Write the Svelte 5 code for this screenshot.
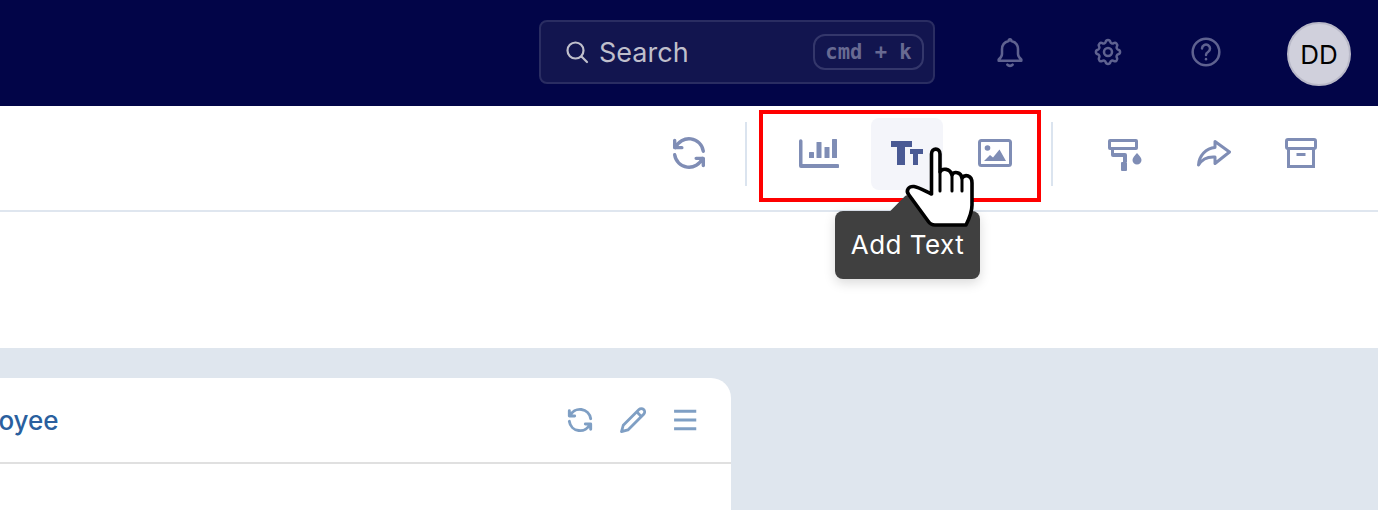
<script>
	// x, width, height of the little chart bars
	const bars = [
		[10, 5, 6],
		[17.5, 5, 16],
		[25.5, 5, 11],
		[33, 5, 19],
	];
</script>

<main class="page">
	<header class="topbar">
		<div class="search">
			<svg class="search-icon" viewBox="0 0 24 24" fill="none" stroke="currentColor" stroke-width="2.2" stroke-linecap="round">
				<circle cx="10.5" cy="10.5" r="8" />
				<path d="M16.5 16.5 22 22" />
			</svg>
			<span class="search-label">Search</span>
			<kbd>cmd + k</kbd>
		</div>
		<div class="top-icons">
			<svg viewBox="0 0 24 24" fill="none" stroke="currentColor" stroke-width="1.9" stroke-linecap="round" stroke-linejoin="round">
				<path d="M12 2.5a1 1 0 0 1 1 1.2c3 .7 5 3.2 5 6.3v3.500c0 1.500 .8 2.800 2.500 4.200v.8H3.500v-.8C5.200 16.300 6 15 6 13.500V10c0-3.100 2-5.600 5-6.300a1 1 0 0 1 1-1.200z" />
				<path d="M10 21.500c.5 .6 1.200 .9 2 .9s1.500-.3 2-.9" />
			</svg>
			<svg viewBox="0 0 24 24" fill="none" stroke="currentColor" stroke-width="1.9" stroke-linecap="round" stroke-linejoin="round">
				<path d="M10.300 4.300c.4-1.800 3-1.800 3.400 0a1.700 1.700 0 0 0 2.600 1.100c1.500-.9 3.300 .8 2.400 2.400a1.700 1.700 0 0 0 1 2.500c1.800 .4 1.800 3 0 3.400a1.700 1.700 0 0 0-1 2.600c.9 1.500-.9 3.300-2.400 2.400a1.700 1.700 0 0 0-2.600 1c-.4 1.800-3 1.800-3.400 0a1.700 1.700 0 0 0-2.600-1c-1.500 .9-3.300-.9-2.400-2.400a1.700 1.700 0 0 0-1-2.600c-1.800-.4-1.800-3 0-3.400a1.700 1.700 0 0 0 1-2.500c-.9-1.600 .9-3.300 2.400-2.400a1.700 1.700 0 0 0 2.600-1.100z" />
				<circle cx="12" cy="12" r="3" />
			</svg>
			<svg viewBox="0 0 24 24" fill="none" stroke="currentColor" stroke-width="1.9" stroke-linecap="round" stroke-linejoin="round">
				<circle cx="12" cy="12" r="10" />
				<path d="M9 9.300a3 3 0 1 1 4.500 2.700c-1 .6-1.500 1.200-1.500 2.200" />
				<path d="M12 17.300v.1" />
			</svg>
		</div>
		<div class="avatar">DD</div>
	</header>

	<section class="toolbar">
		<button class="tool">
			<svg viewBox="2.5 2.5 19 19" fill="none" stroke="currentColor" stroke-width="1.9" stroke-linecap="round" stroke-linejoin="round">
				<path d="M20 11a8.100 8.100 0 0 0-15.500-2m-.5-4v4h4" />
				<path d="M4 13a8.100 8.100 0 0 0 15.500 2m.5 4v-4h-4" />
			</svg>
		</button>
		<span class="divider"></span>
		<div class="tool-group">
			<button class="tool">
				<svg class="chart" viewBox="0 0 40 32" fill="currentColor">
					<path d="M0 5a1.500 1.500 0 0 1 3.500 0v23H38.500a2 2 0 0 1 0 4H2a2 2 0 0 1-2-2z" />
					{#each bars as [x, w, h]}
						<rect {x} y={22 - h} width={w} height={h} rx="0.5" />
					{/each}
				</svg>
			</button>
			<button class="tool active">
				<svg class="tt" viewBox="0 0 32 24" fill="currentColor">
					<path d="M0 0h21v6h-7v18H6V6H0z" />
					<path d="M19 8h13v5h-5v11h-5V13h-3z" />
				</svg>
			</button>
			<button class="tool">
				<svg class="picture" viewBox="0 0 34 28">
					<rect x="1.500" y="1.500" width="31" height="25" rx="2" fill="none" stroke="currentColor" stroke-width="3" />
					<circle cx="9.500" cy="9" r="2.800" fill="currentColor" />
					<path d="M6 22l6-6 3 2.500 6.500-8L28 22z" fill="currentColor" />
				</svg>
			</button>
		</div>
		<span class="divider"></span>
		<button class="tool">
			<svg class="roller" viewBox="0 0 36 36" fill="currentColor">
				<path fill-rule="evenodd" d="M3 4h26a2 2 0 0 1 2 2v7a2 2 0 0 1-2 2H3a2 2 0 0 1-2-2V6a2 2 0 0 1 2-2zm1 3v5h24V7z" />
				<path d="M4 15h3v3h11a2 2 0 0 1 2 2v7h-4v-5H6a2 2 0 0 1-2-2z" />
				<rect x="14" y="27" width="6" height="9" rx="1" />
				<path d="M30 18c2 2.500 4.500 4.500 4.500 7a4.500 4.500 0 0 1-9 0c0-2.500 2.500-4.500 4.500-7z" />
			</svg>
		</button>
		<button class="tool">
			<svg class="share" viewBox="-1 0 36 30" fill="none" stroke="currentColor" stroke-width="3" stroke-linejoin="round">
				<path d="M19 3.500 33.500 14 19 25.500V19C12 18.500 6 21 2.500 27 3 18 10 10 19 9.500z" />
			</svg>
		</button>
		<button class="tool">
			<svg class="tall" viewBox="0 0 32 30" fill="none" stroke="currentColor" stroke-width="3">
				<rect x="1.500" y="1.500" width="29" height="9" rx="1.500" />
				<path d="M3.500 10.500V28.500h25V10.500" />
				<path d="M11.500 16.500h9" />
			</svg>
		</button>

		<!-- annotation laid over the toolbar -->
		<div class="highlight"></div>
		<div class="tooltip">Add Text</div>
		<svg class="cursor" viewBox="900 140 80 95">
			<path d="M931.5 194V154C931.5 147.500 940 147.500 940 154V172C942 168 950 168 952 175C954 171 961 172 962 178C965 174 972 175 972 183V205C972 213 969 219 966 225H935C932 225 930 224 928 221L909 195C905 190 909 186 914 186.500C918 187 925 191 931.500 194Z" fill="#fff" stroke="#000" stroke-width="3.600" stroke-linejoin="round" />
			<path d="M940 172V191M952 175V191M962 178V191" fill="none" stroke="#000" stroke-width="3" stroke-linecap="round" />
		</svg>
	</section>

	<section class="blank"></section>

	<section class="content">
		<article class="card">
			<div class="card-head">
				<span class="card-title">Employee</span>
				<div class="card-icons">
					<svg viewBox="1.5 1.5 21 21" fill="none" stroke="currentColor" stroke-width="2.200" stroke-linecap="round" stroke-linejoin="round">
						<path d="M20 11a8.100 8.100 0 0 0-15.500-2m-.5-4v4h4" />
						<path d="M4 13a8.100 8.100 0 0 0 15.500 2m.5 4v-4h-4" />
					</svg>
					<svg viewBox="-1 0 24 24" fill="none" stroke="currentColor" stroke-width="2.400" stroke-linejoin="round">
						<path d="M2 22l1.500-5.500L17 3a2.800 2.800 0 0 1 4 4L7.500 20.500z" />
						<path d="M15 5l4 4" />
					</svg>
					<svg viewBox="0 0 24 24" fill="none" stroke="currentColor" stroke-width="2.600">
						<path d="M3.500 4.500h19M3.500 12h19M3.500 19.500h19" />
					</svg>
				</div>
			</div>
		</article>
	</section>
</main>

<style>
	:global(body) {
		overflow: hidden;
	}

	.page {
		display: flex;
		flex-direction: column;
		height: 510px;
		overflow: hidden;
		font-family: Inter, "Liberation Sans", sans-serif;
		background: #fff;
	}

	.topbar {
		display: flex;
		align-items: center;
		justify-content: flex-end;
		flex: none;
		height: 106px;
		padding-right: 27px;
		box-sizing: border-box;
		background: #020548;
	}

	.search {
		display: flex;
		align-items: center;
		box-sizing: border-box;
		width: 396px;
		height: 64px;
		margin-bottom: 2px;
		padding: 0 9px 0 24px;
		border: 2px solid #2a2d62;
		border-radius: 8px;
		background: #12154f;
		color: #bfbfcb;
	}

	.search-icon {
		width: 24px;
		height: 24px;
		margin-right: 10px;
	}

	.search-label {
		font-size: 27px;
	}

	kbd {
		margin-left: auto;
		box-sizing: border-box;
		width: 111px;
		height: 36px;
		border: 2px solid #34376b;
		border-radius: 12px;
		font-family: "DejaVu Sans Mono", monospace;
		font-weight: 700;
		font-size: 20.500px;
		line-height: 32px;
		text-align: center;
		color: #686a92;
	}

	.top-icons {
		display: flex;
		gap: 66px;
		margin: 0 65px 0 59px;
		color: #5f6290;
	}

	.top-icons svg {
		display: block;
		width: 32px;
		height: 32px;
		margin-bottom: 2px;
	}

	.avatar {
		display: flex;
		align-items: center;
		justify-content: center;
		box-sizing: border-box;
		width: 64px;
		height: 64px;
		margin-top: 2px;
		border: 2px solid #b9b9c8;
		border-radius: 50%;
		background: #d0d0dc;
		font-size: 26px;
		color: #000;
	}

	.toolbar {
		position: relative;
		display: flex;
		align-items: center;
		justify-content: flex-end;
		flex: none;
		box-sizing: border-box;
		height: 106px;
		padding: 12px 41px 20px 0;
		border-bottom: 2px solid #dfe6ef;
		gap: 16px;
		color: #7f8db5;
	}

	.tool-group {
		display: flex;
		gap: 16px;
	}

	.tool {
		display: flex;
		align-items: center;
		justify-content: center;
		width: 72px;
		height: 72px;
		padding: 0;
		border: none;
		border-radius: 8px;
		background: none;
		color: inherit;
	}

	.tool svg {
		width: 34px;
		height: 34px;
		margin-bottom: 2px;
	}

	.tool svg.chart {
		width: 40px;
		height: 32px;
		margin-bottom: 4px;
	}

	.tool svg.tt {
		width: 32px;
		height: 24px;
	}

	.tool svg.picture {
		width: 34px;
		height: 28px;
	}

	.tool svg.roller {
		width: 36px;
		height: 36px;
	}

	.tool svg.share {
		width: 36px;
		height: 30px;
	}

	.tool svg.tall {
		width: 32px;
		height: 30px;
	}

	.active {
		background: #f4f5fa;
		color: #4a5a94;
	}

	.divider {
		flex: none;
		width: 2px;
		height: 64px;
		margin: 0 20px 0 4px;
		background: #dbe4ef;
	}

	.highlight {
		position: absolute;
		left: 759px;
		top: 4px;
		box-sizing: border-box;
		width: 282px;
		height: 92px;
		border: 4px solid #fe0000;
	}

	.tooltip {
		position: absolute;
		left: 835px;
		top: 105px;
		box-sizing: border-box;
		width: 145px;
		height: 68px;
		border-radius: 8px;
		background: #404040;
		box-shadow: 0 4px 12px rgba(0, 0, 0, 0.15);
		font-size: 26px;
		letter-spacing: 0.5px;
		line-height: 68px;
		text-align: center;
		color: #fff;
	}

	.tooltip::before {
		content: "";
		position: absolute;
		left: 58px;
		top: -11px;
		width: 28px;
		height: 28px;
		background: #404040;
		transform: rotate(45deg);
		border-radius: 3px;
	}

	.cursor {
		position: absolute;
		left: 900px;
		top: 34px;
		width: 80px;
		height: 95px;
	}

	.blank {
		flex: none;
		height: 136px;
	}

	.content {
		flex: 1;
		padding-top: 30px;
		background: #dfe6ee;
	}

	.card {
		width: 731px;
		height: 100%;
		border-radius: 0 20px 0 0;
		background: #fff;
	}

	.card-head {
		display: flex;
		align-items: center;
		justify-content: space-between;
		box-sizing: border-box;
		height: 86px;
		padding-right: 33px;
		border-bottom: 2px solid #e0e0e0;
	}

	.card-title {
		margin-left: -63px;
		font-size: 26px;
		font-weight: 500;
		color: #2a5f9e;
	}

	.card-icons {
		display: flex;
		gap: 24px;
		color: #7f9fc4;
	}

	.card-icons svg {
		display: block;
		width: 28px;
		height: 28px;
	}
</style>
